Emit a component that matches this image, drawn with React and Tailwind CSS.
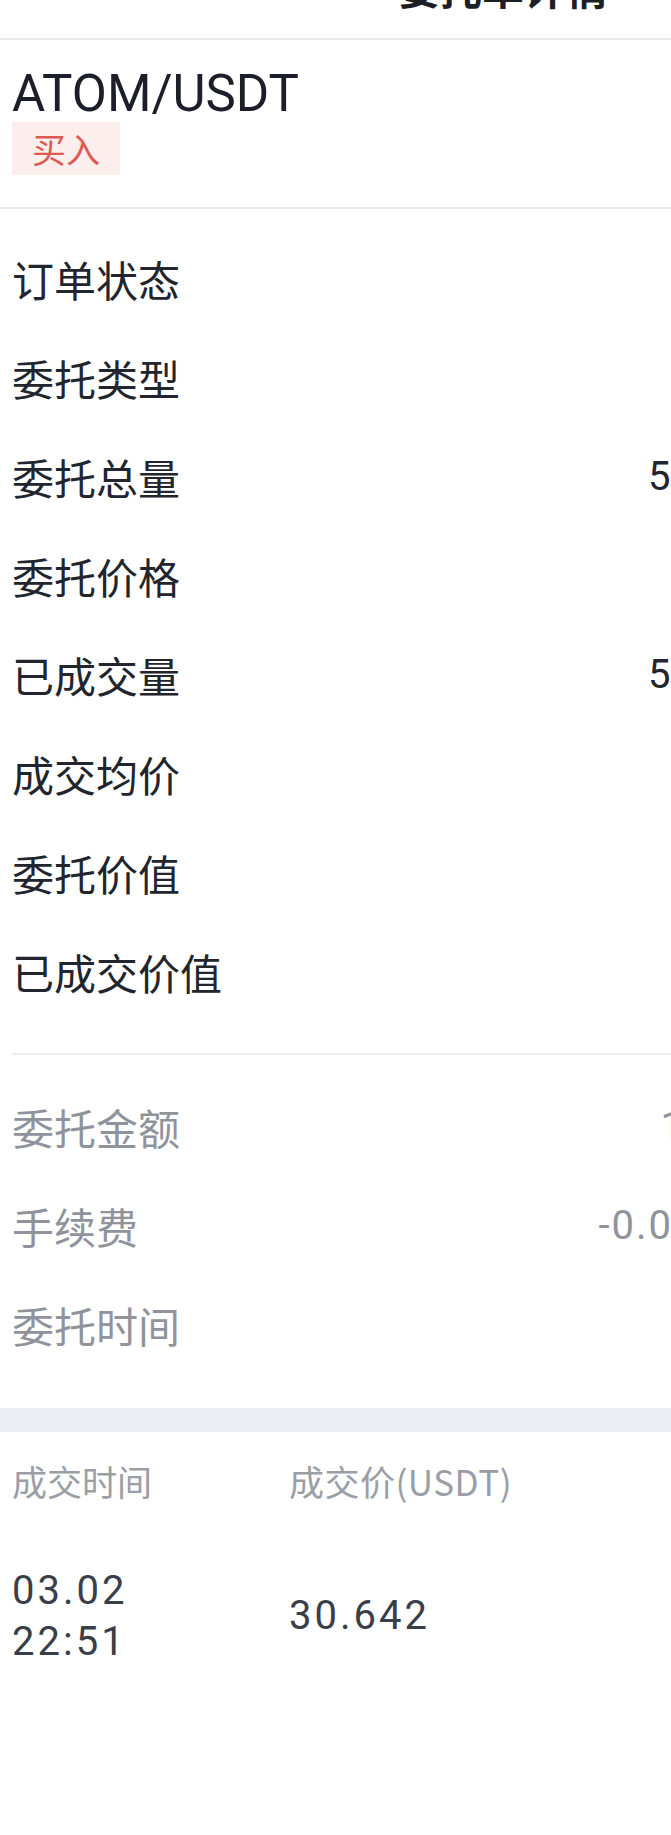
const cjk = { fontFamily: '"Noto Sans CJK SC", "Noto Sans", sans-serif' };
const num = { fontFamily: 'Roboto, "Noto Sans CJK SC", sans-serif' };

const mainRows = [
  { label: '订单状态', value: '完成' },
  { label: '委托类型', value: '限价' },
  { label: '委托总量', value: '5.0000' },
  { label: '委托价格', value: '30.64' },
  { label: '已成交量', value: '5.0000' },
  { label: '成交均价', value: '30.64' },
  { label: '委托价值', value: '153.2' },
  { label: '已成交价值', value: '153.2' },
];

const subRows = [
  { label: '委托金额', value: '15.32', spaced: true },
  { label: '手续费', value: '-0.00153', spaced: true },
  { label: '委托时间', value: '22:51' },
];

function Row({ label, value, muted, spaced }) {
  return (
    <div className="flex h-[99px] items-center justify-between px-3">
      <span
        className={`text-[42px] leading-none ${muted ? 'text-[#8f949c]' : 'text-[#22252d]'}`}
        style={cjk}
      >
        {label}
      </span>
      <span
        className={`text-[40px] leading-none ${spaced ? 'tracking-[2px]' : ''} ${muted ? 'text-[#8f949c]' : 'text-[#22252d]'}`}
        style={num}
      >
        {value}
      </span>
    </div>
  );
}

export default function App() {
  return (
    <div className="w-full overflow-hidden bg-white">
      <div className="w-[783px]">
        {/* page title, mostly scrolled out of view */}
        <div className="h-[38px] overflow-hidden">
          <div
            className="-mt-[34px] pl-[398px] text-[42px] font-bold leading-none text-[#1d1f26]"
            style={cjk}
          >
            委托单详情
          </div>
        </div>
        <div className="h-[2px] bg-[#ebebeb]" />

        <div className="px-3 pt-[28px] pb-[32px]">
          <div className="text-[51px] leading-none text-[#1c1f2a]" style={num}>
            ATOM/USDT
          </div>
          <div className="mt-[3px] flex h-[53px] w-[108px] items-center justify-center bg-[#fdeeee]">
            <span className="text-[34px] leading-none text-[#dc5a52]" style={cjk}>
              买入
            </span>
          </div>
        </div>
        <div className="h-[2px] bg-[#e8e8e8]" />

        <div className="pt-[20px] pb-[32px]">
          {mainRows.map((r) => (
            <Row key={r.label} {...r} />
          ))}
        </div>

        <div className="ml-3 h-[2px] bg-[#ececec]" />

        <div className="pt-[22px] pb-[34px]">
          {subRows.map((r) => (
            <Row key={r.label} {...r} muted />
          ))}
        </div>

        <div className="h-[24px] bg-[#eceef3]" />

        <div className="grid grid-cols-[277px_1fr] px-3">
          <div className="flex h-[96px] items-center">
            <span className="text-[35px] leading-none text-[#9a9ea6]" style={cjk}>
              成交时间
            </span>
          </div>
          <div className="flex h-[96px] items-center">
            <span className="text-[35px] leading-none tracking-[0.5px] text-[#9a9ea6]" style={cjk}>
              成交价(USDT)
            </span>
          </div>

          <div className="pt-[37px]">
            <div className="text-[40px] leading-[51px] tracking-[3px] text-[#3a3e49]" style={num}>
              03.02
            </div>
            <div className="text-[40px] leading-[51px] tracking-[3px] text-[#3a3e49]" style={num}>
              22:51
            </div>
          </div>
          <div className="flex items-center pt-[37px]">
            <span className="text-[40px] leading-none tracking-[3px] text-[#3a3e49]" style={num}>
              30.642
            </span>
          </div>
        </div>

        <div className="h-[160px]" />
      </div>
    </div>
  );
}
